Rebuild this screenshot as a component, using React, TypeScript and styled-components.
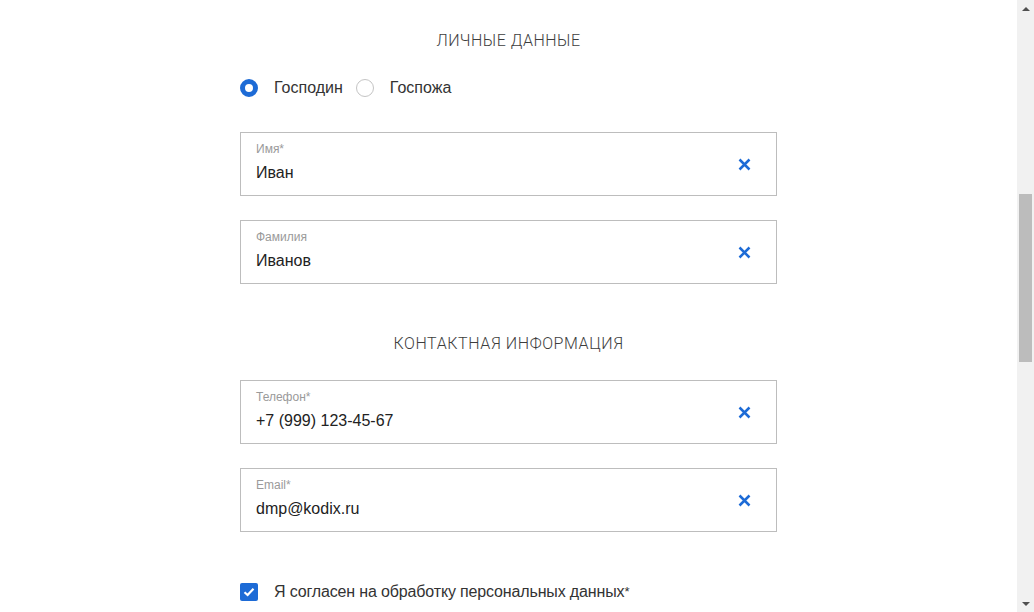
import React, { useState } from "react";
import styled, { createGlobalStyle } from "styled-components";

const GlobalStyle = createGlobalStyle`
  html, body {
    margin: 0;
    padding: 0;
    background: #fff;
    overflow: hidden;
  }
  body {
    font-family: "Liberation Sans", Arial, sans-serif;
    color: #333;
  }
`;

const BLUE = "#1d6bd6";

const Page = styled.div`
  display: flex;
  height: 100vh;
  background: #fff;
`;

const Main = styled.main`
  flex: 1;
  overflow: hidden;
`;

// the window's scrollbar, drawn: headless browsers do not paint one
const ScrollTrack = styled.div`
  width: 17px;
  flex: none;
  display: flex;
  flex-direction: column;
  background: #f1f1f1;
`;

const ScrollArrow = styled.div`
  height: 17px;
  flex: none;
  display: flex;
  align-items: center;
  justify-content: center;
`;

const ScrollThumb = styled.div<{ $before: number; $size: number }>`
  margin: ${(p) => p.$before}px 2px 0;
  height: ${(p) => p.$size}px;
  background: #bcbcbc;
`;

const ScrollRest = styled.div`
  flex: 1;
`;

const Form = styled.form`
  width: 537px;
  margin: 0 auto;
  padding-top: 31px;
  display: flex;
  flex-direction: column;
`;

const SectionTitle = styled.h2<{ $spacing: number; $gap: number }>`
  margin: 0 0 ${(p) => p.$gap}px;
  font-family: Roboto, "Liberation Sans", sans-serif;
  font-weight: 300;
  font-size: 16px;
  line-height: 20px;
  letter-spacing: ${(p) => p.$spacing}px;
  text-align: center;
  text-transform: uppercase;
  color: #3d3d3d;
`;

const RadioRow = styled.div`
  display: flex;
  align-items: center;
  height: 20px;
  margin-bottom: 34px;
`;

const RadioLabel = styled.label`
  display: flex;
  align-items: center;
  font-size: 16px;
  line-height: 20px;
  color: #333;
  margin-right: 13px;
  cursor: pointer;
`;

const RadioCircle = styled.span<{ $checked: boolean }>`
  width: 18px;
  height: 18px;
  box-sizing: border-box;
  border-radius: 50%;
  border: ${(p) => (p.$checked ? `5.5px solid ${BLUE}` : "1px solid #c4c4c4")};
  background: #fff;
  margin-right: 16px;
  flex: none;
`;

const Fields = styled.div<{ $after: number }>`
  display: flex;
  flex-direction: column;
  gap: 24px;
  margin-bottom: ${(p) => p.$after}px;
`;

const FieldBox = styled.div`
  position: relative;
  height: 64px;
  box-sizing: border-box;
  border: 1px solid #bdbdbd;
  padding: 9px 50px 0 15px;
  background: #fff;
`;

const FieldLabel = styled.div`
  font-size: 12px;
  line-height: 14px;
  color: #9a9a9a;
`;

const FieldValue = styled.input`
  display: block;
  margin-top: 7px;
  width: 100%;
  border: 0;
  padding: 0;
  outline: none;
  font-family: "Liberation Sans", Arial, sans-serif;
  font-size: 16px;
  line-height: 20px;
  height: 20px;
  color: #222;
  background: transparent;
`;

const ClearButton = styled.button`
  position: absolute;
  right: 25px;
  top: 24px;
  width: 14px;
  height: 14px;
  padding: 0;
  border: 0;
  background: none;
  display: flex;
  align-items: center;
  justify-content: center;
  cursor: pointer;
`;

const CheckRow = styled.label`
  display: flex;
  align-items: center;
  height: 20px;
  font-size: 16px;
  line-height: 20px;
  letter-spacing: -0.15px;
  color: #333;
`;

const Required = styled.sup`
  font-size: 13px;
  line-height: 0;
  vertical-align: 5px;
`;

const CheckBox = styled.span`
  width: 18px;
  height: 18px;
  border-radius: 2px;
  background: ${BLUE};
  display: flex;
  align-items: center;
  justify-content: center;
  margin-right: 16px;
  flex: none;
`;

const ClearIcon = () => (
  <svg width="13" height="13" viewBox="0 0 13 13">
    <path d="M1.5 1.5 L11.5 11.5 M11.5 1.5 L1.5 11.5" stroke={BLUE} strokeWidth="2.5" />
  </svg>
);

const CheckIcon = () => (
  <svg width="12" height="10" viewBox="0 0 12 10">
    <path d="M1.5 5.2 L4.6 8 L10.5 1.8" stroke="#fff" strokeWidth="2.2" fill="none" />
  </svg>
);

const ArrowIcon = ({ down }: { down?: boolean }) => (
  <svg width="8" height="4" viewBox="0 0 8 4">
    <path d={down ? "M0 0 L8 0 L4 4 Z" : "M0 4 L8 4 L4 0 Z"} fill="#505050" />
  </svg>
);

type FieldProps = { label: string; value: string };

const Field = ({ label, value }: FieldProps) => {
  const [text, setText] = useState(value);
  return (
    <FieldBox>
      <FieldLabel>{label}</FieldLabel>
      <FieldValue value={text} onChange={(e) => setText(e.target.value)} />
      <ClearButton type="button" onClick={() => setText("")} aria-label="Очистить">
        <ClearIcon />
      </ClearButton>
    </FieldBox>
  );
};

export default function App() {
  const [gender, setGender] = useState("m");

  return (
    <>
      <GlobalStyle />
      <Page>
        <Main>
          <Form onSubmit={(e) => e.preventDefault()}>
            <SectionTitle $spacing={0.5} $gap={27}>
              Личные данные
            </SectionTitle>
            <RadioRow>
              <RadioLabel onClick={() => setGender("m")}>
                <RadioCircle $checked={gender === "m"} />
                Господин
              </RadioLabel>
              <RadioLabel onClick={() => setGender("f")}>
                <RadioCircle $checked={gender === "f"} />
                Госпожа
              </RadioLabel>
            </RadioRow>
            <Fields $after={50}>
              <Field label="Имя*" value="Иван" />
              <Field label="Фамилия" value="Иванов" />
            </Fields>
            <SectionTitle $spacing={0.6} $gap={26}>
              Контактная информация
            </SectionTitle>
            <Fields $after={50}>
              <Field label="Телефон*" value="+7 (999) 123-45-67" />
              <Field label="Email*" value="dmp@kodix.ru" />
            </Fields>
            <CheckRow>
              <CheckBox>
                <CheckIcon />
              </CheckBox>
              Я согласен на обработку персональных данных<Required>*</Required>
            </CheckRow>
          </Form>
        </Main>
        <ScrollTrack>
          <ScrollArrow>
            <ArrowIcon />
          </ScrollArrow>
          <ScrollThumb $before={177} $size={168} />
          <ScrollRest />
          <ScrollArrow>
            <ArrowIcon down />
          </ScrollArrow>
        </ScrollTrack>
      </Page>
    </>
  );
}
